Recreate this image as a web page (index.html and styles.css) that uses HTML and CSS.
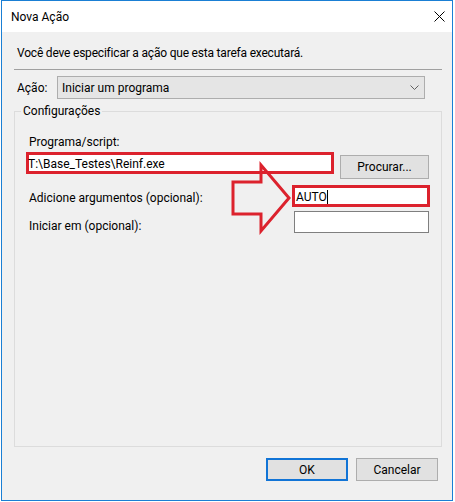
FILE: index.html
```html
<!DOCTYPE html>
<html lang="pt">
<head>
    <meta charset="UTF-8">
    <title>Nova Ação</title>
    <link rel="stylesheet" href="styles.css">
</head>
<body>
    <div class="window">
        <!-- Barra de título -->
        <div class="titlebar">
            <span>Nova Ação</span>
            <svg class="close" width="11" height="11" viewBox="0 0 11 11">
                <path d="M0.5 0.5 L10.5 10.5 M10.5 0.5 L0.5 10.5" stroke="#000" stroke-width="1" fill="none"/>
            </svg>
        </div>

        <div class="content">
            <p class="intro">Você deve especificar a ação que esta tarefa executará.</p>
            <hr class="sep">

            <div class="action-row">
                <label>Ação:</label>
                <div class="select">
                    <span>Iniciar um programa</span>
                    <svg width="9" height="6" viewBox="0 0 9 6">
                        <path d="M0.5 0.5 L4.5 4.5 L8.5 0.5" stroke="#606060" stroke-width="1" fill="none"/>
                    </svg>
                </div>
            </div>

            <!-- Caixa de configurações -->
            <fieldset class="group">
                <legend>Configurações</legend>
                <div class="group-body">
                    <div class="field-label">Programa/script:</div>
                    <div class="prog-row">
                        <div class="input marked prog">T:\Base_Testes\Reinf.exe</div>
                        <button class="btn browse">Procurar...</button>
                    </div>
                    <div class="arg-row">
                        <label class="lbl-args">Adicione argumentos (opcional):</label>
                        <div class="input marked args">AUTO<span class="caret"></span></div>
                    </div>
                    <div class="arg-row second">
                        <label class="lbl-start">Iniciar em (opcional):</label>
                        <div class="input plain"></div>
                    </div>
                </div>
                <!-- Seta de destaque -->
                <svg class="arrow" width="67" height="77" viewBox="0 0 67 77">
                    <polygon points="5,23 33,23 33,6 61,39 33,72 33,55 5,55" fill="none" stroke="#dc222d" stroke-width="3"/>
                </svg>
            </fieldset>

            <div class="buttons">
                <button class="btn ok">OK</button>
                <button class="btn">Cancelar</button>
            </div>
        </div>
    </div>
</body>
</html>
```

FILE: styles.css
```css
body {
    margin: 0;
    background-color: #ffffff;
    font-family: Roboto, "Noto Sans", sans-serif;
    font-size: 12px;
    color: #000;
}

* {
    box-sizing: border-box;
}

.window {
    margin-left: 1px;
    width: 452px;
    height: 501px;
    border: 1px solid #1a7fd4;
    background-color: #f0f0f0;
}

.titlebar {
    height: 31px;
    background-color: #ffffff;
    display: flex;
    align-items: center;
    justify-content: space-between;
    padding: 0 7px 0 9px;
}

.content {
    padding: 13px 10px 0 12px;
}

.intro {
    margin: 0 0 8px 3px;
    line-height: 16px;
    letter-spacing: -0.2px;
}

.sep {
    margin: 0;
    height: 0;
    border: 0;
    border-top: 1px solid #a0a0a0;
}

.action-row {
    display: flex;
    align-items: center;
    margin-top: 6px;
    height: 23px;
}

.action-row label {
    width: 40px;
    margin-left: 3px;
}

.select {
    width: 368px;
    height: 23px;
    border: 1px solid #adadad;
    background-color: #e5e5e5;
    display: flex;
    align-items: center;
    justify-content: space-between;
    padding: 0 5px 0 4px;
}

/* Caixa de grupo */
.group {
    position: relative;
    margin: 4px 0 0;
    padding: 0;
    height: 344px;
    border: 1px solid #dcdcdc;
}

.group legend {
    margin-left: 6px;
    padding: 0 2px;
    line-height: 16px;
}

.group-body {
    padding: 0 0 0 14px;
}

.field-label {
    margin-top: 15px;
    line-height: 16px;
}

.prog-row {
    display: flex;
    align-items: flex-start;
    margin-top: 2px;
}

.input {
    background-color: #ffffff;
    height: 22px;
    line-height: 16px;
}

.input.marked {
    border: 3px solid #dc222d;
    padding: 1px 0 0 0;
}

.input.prog {
    margin-left: -3px;
    width: 308px;
    text-indent: -1px;
}

.input.args {
    width: 138px;
    padding-left: 1px;
    display: flex;
    align-items: center;
}

.caret {
    display: inline-block;
    width: 1px;
    height: 14px;
    background-color: #000;
}

.input.plain {
    width: 135px;
    border: 1px solid #7f7f7f;
}

.btn {
    font-family: Roboto, "Noto Sans", sans-serif;
    font-size: 12px;
    color: #000;
    background-color: #e1e1e1;
    border: 1px solid #adadad;
    height: 23px;
    width: 82px;
    padding: 0;
}

.btn.browse {
    width: 89px;
    height: 24px;
    margin: 3px 0 0 6px;
}

.btn.ok {
    border: 2px solid #1174d6;
}

.arg-row {
    display: flex;
    align-items: flex-start;
    margin-top: 6px;
}

.arg-row.second {
    margin-top: 4px;
}

.arg-row label {
    line-height: 16px;
}

.lbl-args {
    width: 263px;
    padding-top: 5px;
}

.lbl-start {
    width: 265px;
    padding-top: 7px;
}

.arrow {
    position: absolute;
    left: 213px;
    top: 40px;
}

.buttons {
    display: flex;
    justify-content: flex-end;
    gap: 8px;
    margin: 11px 4px 0 0;
}
```
